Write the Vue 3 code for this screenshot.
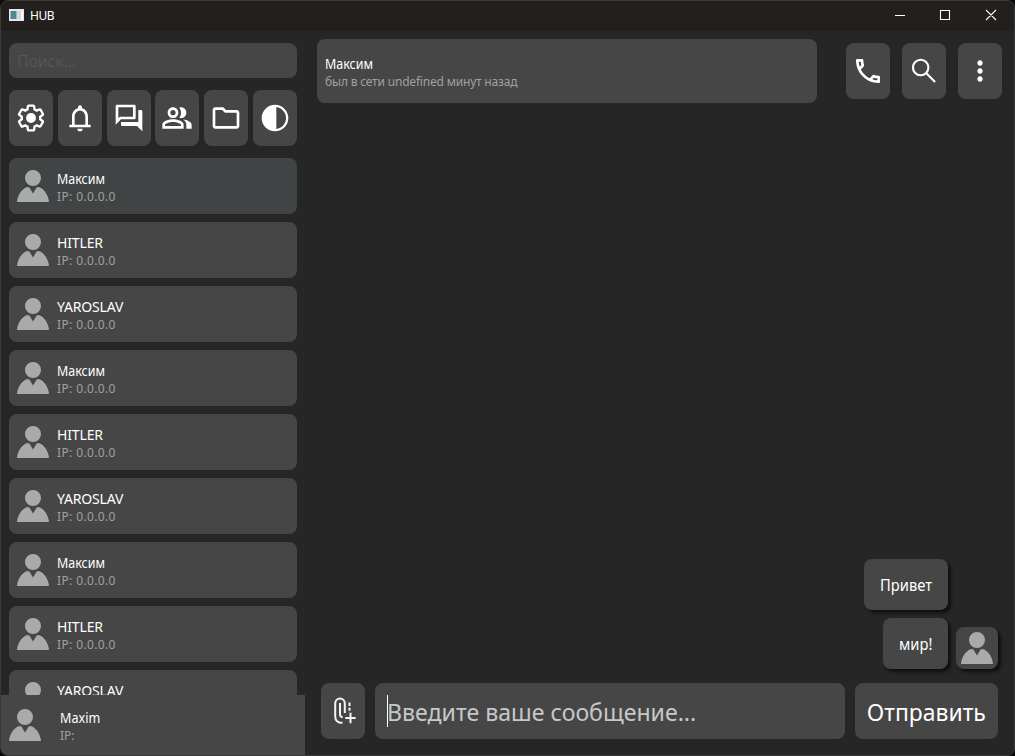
<script setup>
const names = ['Максим', 'HITLER', 'YAROSLAV']
const contacts = Array.from({ length: 9 }, (_, i) => ({ name: names[i % 3], kind: 'n' + (i % 3) }))
const gear = 'M19.43 12.98c.04-.32.07-.64.07-.98 0-.34-.03-.66-.07-.98l2.11-1.65c.19-.15.24-.42.12-.64l-2-3.46c-.09-.16-.26-.25-.44-.25-.06 0-.12.01-.17.03l-2.49 1c-.52-.4-1.08-.73-1.69-.98l-.38-2.65C14.46 2.18 14.25 2 14 2h-4c-.25 0-.46.18-.49.42l-.38 2.65c-.61.25-1.17.59-1.69.98l-2.49-1c-.06-.02-.12-.03-.18-.03-.17 0-.34.09-.43.25l-2 3.46c-.13.22-.07.49.12.64l2.11 1.65c-.04.32-.07.65-.07.98 0 .33.03.66.07.98l-2.11 1.65c-.19.15-.24.42-.12.64l2 3.46c.09.16.26.25.44.25.06 0 .12-.01.17-.03l2.49-1c.52.4 1.08.73 1.69.98l.38 2.65c.03.24.24.42.49.42h4c.25 0 .46-.18.49-.42l.38-2.65c.61-.25 1.17-.59 1.69-.98l2.49 1c.06.02.12.03.18.03.17 0 .34-.09.43-.25l2-3.46c.12-.22.07-.49-.12-.64l-2.11-1.65z'
const toolbar = [
  'M12 22c1.1 0 2-.9 2-2h-4c0 1.1.9 2 2 2zm6-6v-5c0-3.07-1.63-5.64-4.5-6.32V4c0-.83-.67-1.5-1.5-1.5s-1.5.67-1.5 1.5v.68C7.64 5.36 6 7.92 6 11v6H4v2h16v-2h-2zm-2 1H8v-6c0-2.48 1.51-4.5 4-4.5s4 2.02 4 4.5v6z',
  'M15 4v7H5.17L4 12.17V4h11m1-2H3c-.55 0-1 .45-1 1v14l4-4h10c.55 0 1-.45 1-1V3c0-.55-.45-1-1-1zm5 4h-2v9H6v2c0 .55.45 1 1 1h11l4 4V7c0-.55-.45-1-1-1z',
  'M16.67 13.13C18.04 14.06 19 15.32 19 17v3h4v-3c0-2.18-3.57-3.47-6.33-3.87zM15 12c2.21 0 4-1.79 4-4s-1.79-4-4-4c-.47 0-.91.1-1.33.24C14.5 5.27 15 6.58 15 8s-.5 2.73-1.33 3.76c.42.14.86.24 1.33.24zM9 12c2.21 0 4-1.79 4-4s-1.79-4-4-4-4 1.79-4 4 1.79 4 4 4zm0-6c1.1 0 2 .9 2 2s-.9 2-2 2-2-.9-2-2 .9-2 2-2zm0 7c-2.67 0-8 1.34-8 4v3h16v-3c0-2.66-5.33-4-8-4zm6 5H3v-.99C3.2 16.29 6.3 15 9 15s5.8 1.29 6 2v1z',
  'M9.17 6l2 2H20v10H4V6h5.17M10 4H4c-1.1 0-2 .9-2 2v12c0 1.1.9 2 2 2h16c1.1 0 2-.9 2-2V8c0-1.1-.9-2-2-2h-8l-2-2z',
  'M12 2C6.48 2 2 6.48 2 12s4.480 10 10 10 10-4.480 10-10S17.520 2 12 2zM13 20.300V3.700C17 4.300 20.300 7.700 20.300 12s-3.300 7.700-7.300 8.300z'
]
const phone = 'M6.54 5c.06.89.21 1.76.45 2.59l-1.2 1.2c-.41-1.2-.67-2.47-.76-3.79h1.51m9.86 12.02c.85.24 1.72.39 2.6.45v1.49c-1.32-.09-2.59-.35-3.8-.75l1.2-1.19M7.5 3H4c-.55 0-1 .45-1 1 0 9.39 7.61 17 17 17 .55 0 1-.45 1-1v-3.49c0-.55-.45-1-1-1-1.24 0-2.45-.2-3.57-.57-.1-.04-.21-.05-.31-.05-.26 0-.51.1-.71.29l-2.2 2.2c-2.83-1.45-5.15-3.76-6.59-6.59l2.2-2.2c.28-.28.36-.67.25-1.02C8.7 6.45 8.5 5.25 8.5 4c0-.55-.45-1-1-1z'
const dots = 'M12 8c1.1 0 2-.9 2-2s-.9-2-2-2-2 .9-2 2 .9 2 2 2zm0 2c-1.1 0-2 .9-2 2s.9 2 2 2 2-.9 2-2-.9-2-2-2zm0 6c-1.1 0-2 .9-2 2s.9 2 2 2 2-.9 2-2-.9-2-2-2z'
const person = 'M8 8a8 8 0 1 0 16 0a8 8 0 1 0-16 0M0 32C.5 26 4 19.500 9.500 17.300L12.200 17.300L16 23.500L19.800 17.300L22.500 17.300C28 19.500 31.500 26 32 32Z'
</script>

<template>
  <div class="window">
    <header class="titlebar">
      <svg class="appicon" viewBox="0 0 15 12"><rect width="15" height="12" fill="#e4e8e7"/><rect x="1.500" y="2" width="6" height="8" fill="#4e8791"/><rect x="8.500" y="2" width="3.500" height="8" fill="#d0d8d8"/><path d="M12 3h2v7h-2z" fill="#f5f5f5"/></svg>
      <span class="title">HUB</span>
      <svg class="controls" viewBox="0 0 102 12"><path d="M0 6.500h10M45.500 1.500h9v9h-9zM91 1l10 10M101 1L91 11" fill="none" stroke="#fff" stroke-width="1.100"/></svg>
    </header>
    <div class="body">
      <aside>
        <div class="search"><span>Поиск...</span></div>
        <nav class="tools">
          <button class="btn"><svg class="icon" viewBox="0 0 24 24"><path :d="gear" transform="translate(.9 .9) scale(.925)" fill="none" stroke="#fff" stroke-width="1.900"/><circle cx="12" cy="12" r="3.700"/></svg></button>
          <button v-for="(d, i) in toolbar" :key="i" class="btn"><svg class="icon" viewBox="0 0 24 24"><path :d="d"/></svg></button>
        </nav>
        <div class="list">
          <div v-for="(c, i) in contacts" :key="i" class="contact" :class="{ active: i === 0 }">
            <svg class="person" viewBox="0 0 32 32"><path :d="person"/></svg>
            <div class="info"><span class="name" :class="c.kind">{{ c.name }}</span><span class="sub ip">IP: 0.0.0.0</span></div>
          </div>
        </div>
        <footer class="me">
          <svg class="person" viewBox="0 0 32 32"><path :d="person"/></svg>
          <div class="info"><span class="name mx">Maxim</span><span class="sub">IP:</span></div>
        </footer>
      </aside>
      <main>
        <div class="chathead">
          <div class="peer"><span class="name n0">Максим</span><span class="sub seen">был в сети undefined минут назад</span></div>
          <div class="actions">
            <button class="btn"><svg class="icon" viewBox="0 0 24 24"><path :d="phone"/></svg></button>
            <button class="btn"><svg class="icon" viewBox="0 0 24 24"><path d="M15.300 9.400a5.800 5.800 0 1 1-11.600 0a5.800 5.800 0 1 1 11.600 0M13.600 13.500L20.300 20.200" fill="none" stroke="#fff" stroke-width="1.600"/></svg></button>
            <button class="btn"><svg class="icon" viewBox="0 0 24 24"><path :d="dots"/></svg></button>
          </div>
        </div>
        <div class="messages">
          <div class="bubbles"><div class="bubble b1"><span>Привет</span></div><div class="bubble b2"><span>мир!</span></div></div>
          <div class="avatar"><svg class="person" viewBox="0 0 32 32"><path :d="person"/></svg></div>
        </div>
        <div class="composer">
          <button class="btn"><svg class="clip" viewBox="0 0 24 28"><path d="M13.800 16V6.600a4.800 5 0 0 0-9.600 0V19.500c0 4 2.600 6.500 7.300 6.300M9 6V17.500a2 2.400 0 0 0 2.600 2.300M18.500 5.500v3.600M18.500 10.800v3M19.500 15.800v10.400M14.300 21h10.400" fill="none" stroke="#f4f4f4" stroke-width="2"/></svg></button>
          <div class="input"><i class="caret"></i><span>Введите ваше сообщение...</span></div>
          <button class="send"><span>Отправить</span></button>
        </div>
      </main>
    </div>
  </div>
</template>

<style>
body { background: #0b0b0b; overflow: hidden; }
</style>
<style scoped>
* { box-sizing: border-box; }
.window { width: 1015px; height: 756px; border: 1px solid #3a3a3a; border-radius: 8px; overflow: hidden; background: #262626; font-family: "Noto Sans", sans-serif; color: #fff; display: flex; flex-direction: column; }
.titlebar { height: 30px; background: #221f1d; display: flex; align-items: center; padding: 0 17px 2px 8px; flex: none; }
.appicon { width: 15px; height: 12px; }
.title { font-size: 12px; margin: 2px 0 0 6px; letter-spacing: -.5px; line-height: 16px; }
.controls { width: 102px; height: 12px; margin-left: auto; }
.body { display: flex; height: 724px; }
aside { width: 304px; height: 724px; display: flex; flex-direction: column; }
.search { margin: 12px 8px; width: 288px; height: 35px; flex: none; border-radius: 8px; background: #464646; color: #555; padding-left: 8px; font-size: 16px; line-height: 36px; letter-spacing: -.2px; }
.tools { display: flex; justify-content: space-between; width: 288px; margin-left: 8px; flex: none; }
button { border: 0; padding: 0; font-family: inherit; color: #fff; background: #464646; }
.btn { width: 44px; height: 56px; border-radius: 8px; display: flex; align-items: center; justify-content: center; }
.icon { width: 32px; height: 32px; fill: #fff; }
.list { flex: 1; min-height: 0; overflow: hidden; margin: 12px 8px 0; display: flex; flex-direction: column; gap: 8px; }
.contact { height: 56px; flex: none; border-radius: 8px; background: #464646; display: flex; align-items: center; padding-left: 8px; gap: 8px; }
.contact.active { background: #404444; }
.person { width: 32px; height: 32px; fill: #a9abab; flex: none; }
.info, .peer { display: flex; flex-direction: column; align-items: flex-start; white-space: nowrap; }
.name { font-size: 14px; line-height: 18px; transform-origin: left center; }
.n0 { transform: scaleX(.89); }
.n1 { letter-spacing: -.15px; }
.n2 { letter-spacing: -.15px; }
.mx { transform: scaleX(.9); }
.sub { font-size: 12px; line-height: 17px; color: #a0a0a0; }
.ip { letter-spacing: .37px; }
.seen { letter-spacing: -.19px; }
.info { padding-top: 3px; }
.me { height: 60px; flex: none; background: #464646; display: flex; align-items: center; padding-left: 8px; gap: 19px; }
.me .info { padding-top: 2px; }
main { flex: 1; display: flex; flex-direction: column; padding: 8px 12px 0 12px; }
.chathead { display: flex; justify-content: space-between; }
.peer { width: 500px; height: 64px; border-radius: 8px; background: #464646; padding: 16px 8px; }
.actions { display: flex; gap: 12px; padding-top: 4px; }
.messages { flex: 1; display: flex; justify-content: flex-end; align-items: flex-end; gap: 8px; padding: 0 4px 14px 0; }
.bubbles { display: flex; flex-direction: column; align-items: flex-end; gap: 8px; }
.bubble { height: 51px; border-radius: 8px; background: #464646; padding-left: 16px; font-size: 16px; line-height: 53px; box-shadow: 3px 3px 3px #111; white-space: nowrap; }
.bubble span { display: inline-block; transform: scaleX(.92); transform-origin: left center; }
.b1 { width: 84px; }
.b2 { width: 65px; }
.avatar { width: 42px; height: 42px; border-radius: 8px; background: #464646; box-shadow: 3px 3px 3px #111; padding: 5px; }
.composer { display: flex; gap: 10px; height: 56px; margin: 0 4px 16px; flex: none; }
.input { width: 470px; border-radius: 8px; background: #464646; display: flex; align-items: center; padding-left: 12px; font-size: 24px; color: #c8c8c8; white-space: nowrap; }
.input span { transform: scaleX(.963); transform-origin: left center; }
.caret { width: 1px; height: 32px; background: #fff; margin-right: -1px; }
.send { width: 143px; border-radius: 8px; font-size: 24px; white-space: nowrap; }
.send span { display: inline-block; transform: scaleX(.955); }
.clip { width: 24px; height: 28px; overflow: visible; }
</style>
